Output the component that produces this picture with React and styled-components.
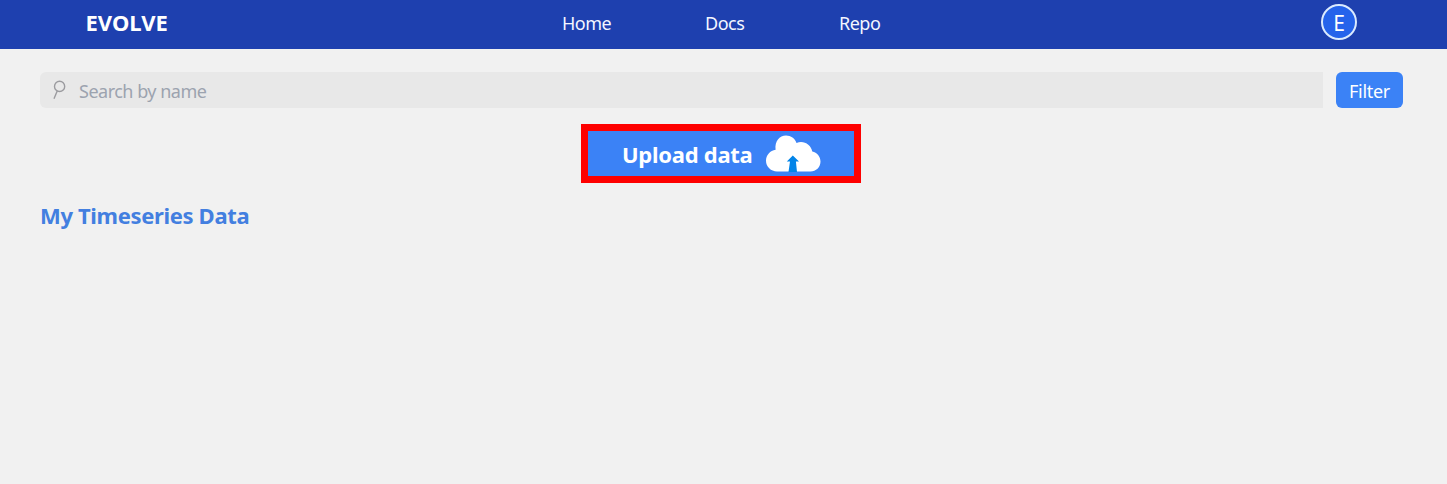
import React from "react";
import styled, { createGlobalStyle } from "styled-components";

const GlobalStyle = createGlobalStyle`
  * { box-sizing: border-box; }
  body {
    margin: 0;
    background: #f1f1f1;
    font-family: "Noto Sans", "Open Sans", sans-serif;
  }
`;

const Page = styled.div`
  min-height: 484px;
  background: #f1f1f1;
`;

const Header = styled.header`
  display: grid;
  grid-template-columns: 476.5px 1fr 36px;
  align-items: center;
  height: 49px;
  padding: 0 90px 5px 85.5px;
  background: #1e40af;
  color: #fff;
`;

const Brand = styled.div`
  font-size: 22px;
  font-weight: 700;
  line-height: 28px;
`;

const Nav = styled.nav`
  display: flex;
  gap: 95px;
  padding-top: 2px;
`;

const NavLink = styled.a`
  width: ${(p) => p.$width}px;
  color: #f3f6ff;
  font-size: 18px;
  line-height: 28px;
  letter-spacing: -0.5px;
  white-space: nowrap;
`;

const Avatar = styled.div`
  display: flex;
  align-items: center;
  justify-content: center;
  width: 36px;
  height: 36px;
  padding-top: 1px;
  border: 2px solid #dbeafe;
  border-radius: 50%;
  background: #2563eb;
  font-size: 21px;
  line-height: 30px;
`;

const Main = styled.main`
  padding: 23px 44px 0 40px;
`;

const Toolbar = styled.div`
  display: flex;
  gap: 13px;
  height: 36px;
`;

const SearchField = styled.div`
  display: flex;
  flex: 1;
  align-items: center;
  padding-left: 12px;
  border-radius: 6px 0 0 6px;
  background: #e8e8e8;
`;

const Placeholder = styled.span`
  margin-left: 12px;
  padding-top: 2px;
  color: #9ca3af;
  font-size: 18px;
  line-height: 26px;
  letter-spacing: -0.5px;
`;

const FilterButton = styled.button`
  width: 67px;
  padding: 2px 0 0;
  border: 0;
  border-radius: 6px;
  background: #3b82f6;
  color: #fff;
  font: 18px "Noto Sans", sans-serif;
  letter-spacing: -0.3px;
`;

const UploadButton = styled.button`
  display: flex;
  align-items: center;
  width: 280px;
  height: 59px;
  margin: 16px auto 0 541px;
  padding: 0 0 0 34px;
  border: 7px solid #fe0000;
  background: #3b82f6;
  color: #fff;
  font: 700 22px "Noto Sans", sans-serif;
`;

const UploadLabel = styled.span`
  width: 144px;
  text-align: left;
  white-space: nowrap;
  letter-spacing: -0.27px;
`;

const Heading = styled.h2`
  margin: 17px 0 0;
  color: #437fe0;
  font-size: 22px;
  font-weight: 700;
  line-height: 30px;
  letter-spacing: -0.34px;
`;

const SearchIcon = () => (
  <svg width="15" height="20" viewBox="0 0 15 20" fill="none" stroke="#9b9b9f" strokeWidth="1.4">
    <circle cx="7.6" cy="6.4" r="5.1" />
    <path d="M5.3 10.8 2 18.8" />
  </svg>
);

const CloudIcon = () => (
  <svg width="55" height="37" viewBox="0 0 55 37">
    <path
      fill="#fff"
      d="M11 36.5C5 36.5 0 31.8 0 25.8 0 20 4.200 15.500 9.600 14.700 8.500 6.500 13.500 .5 20 .5c5 0 8.800 2.800 10.500 7.500C37.500 5 45 9.500 46.300 16.500 51 17.500 54.500 21.500 54.500 26.500c0 5.800-4.500 10-10 10Z"
    />
    <path fill="#0284e8" d="M26.8 20.5 33 26.4h-3.1L31 37h-8.500L24 26.4h-3.200Z" />
  </svg>
);

export default function App() {
  return (
    <Page>
      <GlobalStyle />
      <Header>
        <Brand>EVOLVE</Brand>
        <Nav>
          <NavLink $width={48}>Home</NavLink>
          <NavLink $width={39}>Docs</NavLink>
          <NavLink $width={41}>Repo</NavLink>
        </Nav>
        <Avatar>E</Avatar>
      </Header>
      <Main>
        <Toolbar>
          <SearchField>
            <SearchIcon />
            <Placeholder>Search by name</Placeholder>
          </SearchField>
          <FilterButton>Filter</FilterButton>
        </Toolbar>
        <UploadButton>
          <UploadLabel>Upload data</UploadLabel>
          <CloudIcon />
        </UploadButton>
        <Heading>My Timeseries Data</Heading>
      </Main>
    </Page>
  );
}
